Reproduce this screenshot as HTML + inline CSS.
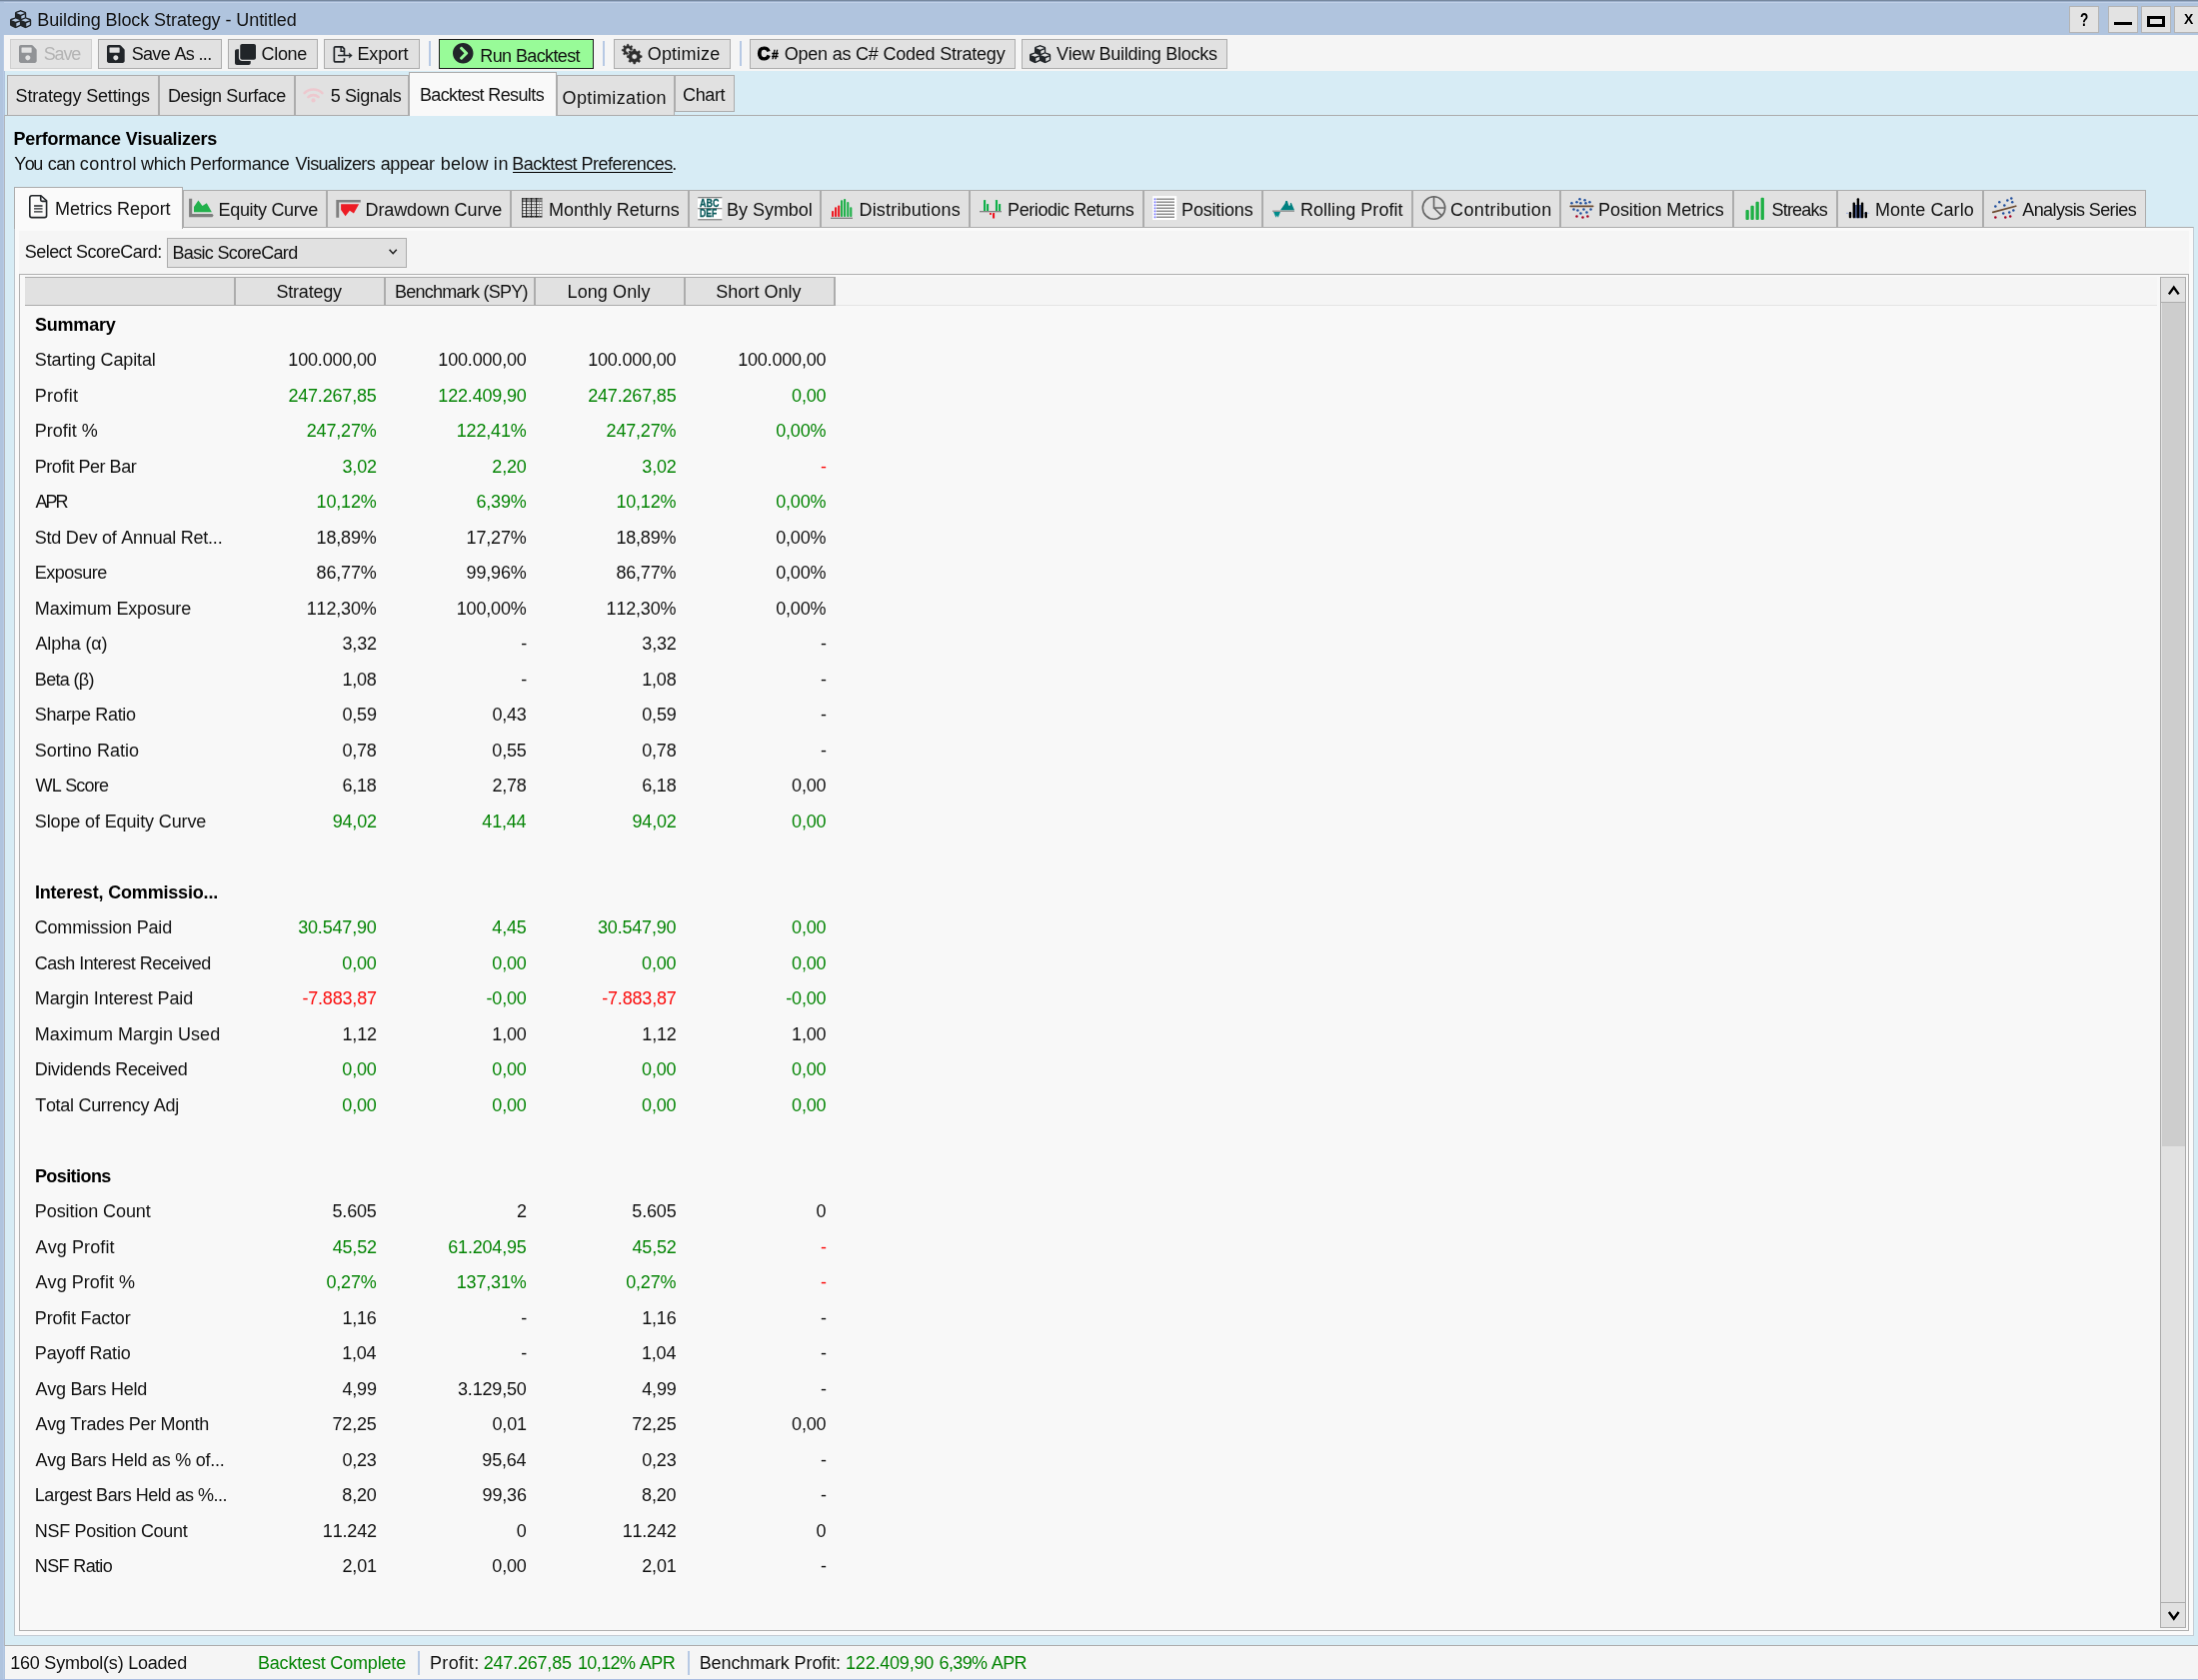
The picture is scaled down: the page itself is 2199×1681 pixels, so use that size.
<!DOCTYPE html>
<html lang="en"><head><meta charset="utf-8"><title>Building Block Strategy - Untitled</title>
<style>
html,body{margin:0;padding:0}
body{width:2199px;height:1681px;position:relative;overflow:hidden;background:#d7ecf5;
font-family:"Liberation Sans",sans-serif;font-size:18.0px;color:#121212;font-kerning:none;}
#root{position:absolute;left:0;top:0;width:2199px;height:1681px;will-change:transform}
.b{position:absolute;box-sizing:content-box}
.t{position:absolute;white-space:pre;line-height:22px;height:22px}
svg{position:absolute;overflow:visible}
</style></head>
<body>
<div id="root">
<div class="b" style="left:0px;top:0px;width:2199px;height:35px;background:#b0c4de;"></div>
<div class="b" style="left:0px;top:0px;width:2199px;height:1px;background:#76889f;"></div>
<div class="b" style="left:0px;top:1px;width:2199px;height:1px;background:#9db0cb;"></div>
<div class="b" style="left:4px;top:2px;width:2195px;height:1px;background:#c0d0e7;"></div>
<div class="b" style="left:0px;top:35px;width:5px;height:1646px;background:#b0c4de;"></div>
<div class="b" style="left:3px;top:35px;width:1px;height:1646px;background:#b8cae4;"></div>
<div class="b" style="left:4px;top:115px;width:1px;height:1532px;background:#b2b6bc;"></div>
<div class="b" style="left:4px;top:35px;width:2195px;height:36px;background:#f5f5f5;"></div>
<svg style="left:9.8px;top:9.8px" width="21.2" height="18.2" viewBox="0 31 512 450" preserveAspectRatio="none" ><path fill="#212529" d="M488.6 250.2L392 214V105.5c0-15-9.3-28.4-23.4-33.7l-100-37.5c-8.1-3.1-17.100-3.100-25.300 0l-100 37.500c-14.100 5.300-23.400 18.700-23.400 33.700V214l-96.600 36.200C9.300 255.500 0 268.900 0 283.900V394c0 13.600 7.700 26.100 19.900 32.200l100 50c10.100 5.100 22.100 5.100 32.200 0l103.900-52 103.900 52c10.100 5.100 22.100 5.100 32.200 0l100-50c12.200-6.100 19.900-18.600 19.900-32.200V283.900c0-15-9.300-28.400-23.400-33.700zM358 214.800l-85 31.900v-68.200l85-37v73.300zM154 104.100l102-38.200 102 38.200v.6l-102 41.400-102-41.400v-.6zm84 291.100l-85 42.500v-79.100l85-38.800v75.400zm0-112l-102 41.400-102-41.400v-.6l102-38.200 102 38.200v.6zm240 112l-85 42.500v-79.100l85-38.800v75.400zm0-112l-102 41.400-102-41.400v-.6l102-38.200 102 38.200v.6z"/></svg>
<span class="t" style="left:37.22px;top:8.50px;letter-spacing:-0.078px;">Building Block Strategy - Untitled</span>
<div class="b" style="left:2070px;top:6px;width:28px;height:25px;background:#e3e3e3;border:1px solid #b4b4b4;"></div>
<div class="b" style="left:2109px;top:6px;width:28px;height:25px;background:#e3e3e3;border:1px solid #b4b4b4;"></div>
<div class="b" style="left:2142px;top:6px;width:28px;height:25px;background:#e3e3e3;border:1px solid #b4b4b4;"></div>
<div class="b" style="left:2175px;top:6px;width:28px;height:25px;background:#e3e3e3;border:1px solid #b4b4b4;"></div>
<span class="t" style="left:2081.20px;top:9.00px;letter-spacing:0.000px;color:#000000;font-size:17.5px;font-weight:700;transform:scaleX(.78);transform-origin:0 0;">?</span>
<div class="b" style="left:2115px;top:21.5px;width:18px;height:3.5px;background:#000;"></div>
<div class="b" style="left:2148px;top:16px;width:18px;height:10.5px;border:3px solid #000;box-sizing:border-box;"></div>
<span class="t" style="left:2184.88px;top:8.20px;letter-spacing:0.000px;color:#000000;font-size:14px;font-weight:700;">X</span>
<div class="b" style="left:10px;top:39px;width:80px;height:28px;background:#e3e3e3;border:1px solid #cfcfcf;"></div>
<svg style="left:19px;top:45px" width="17.7" height="18" viewBox="0 32 448 448" preserveAspectRatio="none" ><path fill="#919396" d="M433.941 129.941l-83.882-83.882A48 48 0 0 0 316.118 32H48C21.490 32 0 53.490 0 80v352c0 26.510 21.490 48 48 48h352c26.510 0 48-21.490 48-48V163.882a48 48 0 0 0-14.059-33.941zM224 416c-35.346 0-64-28.654-64-64 0-35.346 28.654-64 64-64s64 28.654 64 64c0 35.346-28.654 64-64 64zm96-304.520V212c0 6.627-5.373 12-12 12H76c-6.627 0-12-5.373-12-12V108c0-6.627 5.373-12 12-12h228.520c3.183 0 6.235 1.264 8.485 3.515l3.480 3.480A11.996 11.996 0 0 1 320 111.480z"/></svg>
<span class="t" style="left:43.68px;top:42.60px;letter-spacing:-1.137px;color:#b4b4b4;">Save</span>
<div class="b" style="left:98px;top:39px;width:122px;height:28px;background:#e1e1e1;border:1px solid #acacac;"></div>
<svg style="left:107px;top:45px" width="17.7" height="18" viewBox="0 32 448 448" preserveAspectRatio="none" ><path fill="#212529" d="M433.941 129.941l-83.882-83.882A48 48 0 0 0 316.118 32H48C21.490 32 0 53.490 0 80v352c0 26.510 21.490 48 48 48h352c26.510 0 48-21.490 48-48V163.882a48 48 0 0 0-14.059-33.941zM224 416c-35.346 0-64-28.654-64-64 0-35.346 28.654-64 64-64s64 28.654 64 64c0 35.346-28.654 64-64 64zm96-304.520V212c0 6.627-5.373 12-12 12H76c-6.627 0-12-5.373-12-12V108c0-6.627 5.373-12 12-12h228.520c3.183 0 6.235 1.264 8.485 3.515l3.480 3.480A11.996 11.996 0 0 1 320 111.480z"/></svg>
<span class="t" style="left:131.68px;top:42.60px;letter-spacing:-0.658px;">Save As ...</span>
<div class="b" style="left:228px;top:39px;width:88px;height:28px;background:#e1e1e1;border:1px solid #acacac;"></div>
<svg style="left:235px;top:43.8px" width="21" height="21" viewBox="0 0 512 512" preserveAspectRatio="none" ><path fill="#212529" d="M464 0c26.510 0 48 21.490 48 48v288c0 26.510-21.490 48-48 48H176c-26.510 0-48-21.490-48-48V48c0-26.510 21.490-48 48-48h288M176 416c-44.112 0-80-35.888-80-80V128H48c-26.510 0-48 21.490-48 48v288c0 26.510 21.490 48 48 48h288c26.510 0 48-21.490 48-48v-48H176z"/></svg>
<span class="t" style="left:261.59px;top:42.60px;letter-spacing:-0.329px;">Clone</span>
<div class="b" style="left:324px;top:39px;width:94px;height:28px;background:#e1e1e1;border:1px solid #acacac;"></div>
<svg style="left:332.6px;top:46px" width="19" height="17" viewBox="0 0 19 17" preserveAspectRatio="none" ><path d="M11.45 12.2V14.7a1.2 1.2 0 0 1-1.2 1.2H2.55a1.2 1.2 0 0 1-1.2-1.2V2.05A1.2 1.2 0 0 1 2.55 0.85H9.5L11.45 2.9V9" fill="none" stroke="#212529" stroke-width="1.7" stroke-linejoin="round"/><path d="M8.1 1V5.2H11.4" fill="none" stroke="#212529" stroke-width="1.5"/><path d="M5.6 9.5H17.6" stroke="#212529" stroke-width="1.5" stroke-linecap="round" fill="none"/><path d="M16.2 7L19.3 9.5L16.2 12.1L17 9.5z" fill="#212529" stroke="#212529" stroke-width="0.5" stroke-linejoin="round"/></svg>
<span class="t" style="left:357.52px;top:42.60px;letter-spacing:-0.183px;">Export</span>
<div class="b" style="left:429px;top:41px;width:2px;height:25px;background:#b7c9e4;"></div>
<div class="b" style="left:439px;top:39px;width:153px;height:28px;background:#98fb98;border:1px solid #1c1c1c;"></div>
<svg style="left:453px;top:43.2px" width="20.5" height="20.5" viewBox="8 8 496 496" preserveAspectRatio="none" ><path fill="#212529" d="M256 8c137 0 248 111 248 248S393 504 256 504 8 393 8 256 119 8 256 8zm113.900 231L234.400 103.500c-9.400-9.400-24.600-9.400-33.900 0l-17 17c-9.400 9.400-9.400 24.600 0 33.900L285.100 256 183.500 357.600c-9.400 9.400-9.400 24.600 0 33.900l17 17c9.400 9.400 24.600 9.400 33.900 0L369.900 273c9.400-9.400 9.400-24.600 0-34z"/></svg>
<span class="t" style="left:480.32px;top:44.70px;letter-spacing:-0.613px;">Run Backtest</span>
<div class="b" style="left:603px;top:41px;width:2px;height:25px;background:#b7c9e4;"></div>
<div class="b" style="left:614px;top:39px;width:115px;height:28px;background:#e1e1e1;border:1px solid #acacac;"></div>
<svg style="left:621.5px;top:44px" width="20.5" height="20.5" viewBox="0 0 20.5 20.5" preserveAspectRatio="none" ><path d="M10.42 5.14 L12.11 5.54 L12.11 6.86 L10.42 7.26 L9.92 8.47 L10.83 9.95 L9.90 10.88 L8.42 9.97 L7.21 10.47 L6.81 12.16 L5.49 12.16 L5.09 10.47 L3.88 9.97 L2.40 10.88 L1.47 9.95 L2.38 8.47 L1.88 7.26 L0.19 6.86 L0.19 5.54 L1.88 5.14 L2.38 3.93 L1.47 2.45 L2.40 1.52 L3.88 2.43 L5.09 1.93 L5.49 0.24 L6.81 0.24 L7.21 1.93 L8.42 2.43 L9.90 1.52 L10.83 2.45 L9.92 3.93Z M8.35 6.20 A2.2 2.2 0 1 0 3.95 6.20 A2.2 2.2 0 1 0 8.35 6.20Z" fill="#2e2e2e" fill-rule="evenodd" stroke="#2e2e2e" stroke-width="0.5" stroke-linejoin="round"/><path d="M18.23 11.19 L20.15 11.74 L20.15 13.38 L18.23 13.93 L17.58 15.50 L18.55 17.25 L17.39 18.41 L15.64 17.44 L14.07 18.09 L13.52 20.01 L11.88 20.01 L11.33 18.09 L9.76 17.44 L8.01 18.41 L6.85 17.25 L7.82 15.50 L7.17 13.93 L5.25 13.38 L5.25 11.74 L7.17 11.19 L7.82 9.62 L6.85 7.87 L8.01 6.71 L9.76 7.68 L11.33 7.03 L11.88 5.11 L13.52 5.11 L14.07 7.03 L15.64 7.68 L17.39 6.71 L18.55 7.87 L17.58 9.62Z" fill="#e1e1e1" stroke="#e1e1e1" stroke-width="1.8" stroke-linejoin="round"/><path d="M18.23 11.19 L20.15 11.74 L20.15 13.38 L18.23 13.93 L17.58 15.50 L18.55 17.25 L17.39 18.41 L15.64 17.44 L14.07 18.09 L13.52 20.01 L11.88 20.01 L11.33 18.09 L9.76 17.44 L8.01 18.41 L6.85 17.25 L7.82 15.50 L7.17 13.93 L5.25 13.38 L5.25 11.74 L7.17 11.19 L7.82 9.62 L6.85 7.87 L8.01 6.71 L9.76 7.68 L11.33 7.03 L11.88 5.11 L13.52 5.11 L14.07 7.03 L15.64 7.68 L17.39 6.71 L18.55 7.87 L17.58 9.62Z M15.34 12.56 A2.64 2.64 0 1 0 10.06 12.56 A2.64 2.64 0 1 0 15.34 12.56Z" fill="#2e2e2e" fill-rule="evenodd" stroke="#2e2e2e" stroke-width="0.5" stroke-linejoin="round"/></svg>
<span class="t" style="left:647.65px;top:42.60px;letter-spacing:0.234px;">Optimize</span>
<div class="b" style="left:740px;top:41px;width:2px;height:25px;background:#b7c9e4;"></div>
<div class="b" style="left:750px;top:39px;width:264px;height:28px;background:#e1e1e1;border:1px solid #acacac;"></div>
<span class="t" style="left:757.68px;top:43.40px;letter-spacing:0.000px;color:#000000;font-size:17.6px;font-weight:700;-webkit-text-stroke:1.2px #000;">C</span>
<span class="t" style="left:771.99px;top:43.60px;letter-spacing:0.000px;color:#000000;font-size:12px;font-weight:700;-webkit-text-stroke:0.4px #000;">#</span>
<span class="t" style="left:784.75px;top:42.60px;letter-spacing:-0.219px;">Open as C# Coded Strategy</span>
<div class="b" style="left:1022px;top:39px;width:204px;height:28px;background:#e1e1e1;border:1px solid #acacac;"></div>
<svg style="left:1029.6px;top:45.4px" width="21.2" height="18.2" viewBox="0 31 512 450" preserveAspectRatio="none" ><path fill="#212529" d="M488.6 250.2L392 214V105.5c0-15-9.3-28.4-23.4-33.7l-100-37.5c-8.1-3.1-17.100-3.100-25.300 0l-100 37.500c-14.100 5.300-23.400 18.700-23.400 33.700V214l-96.600 36.200C9.300 255.500 0 268.900 0 283.900V394c0 13.600 7.700 26.100 19.900 32.200l100 50c10.100 5.100 22.100 5.100 32.200 0l103.900-52 103.900 52c10.100 5.100 22.100 5.100 32.200 0l100-50c12.200-6.100 19.900-18.600 19.900-32.200V283.900c0-15-9.300-28.400-23.400-33.700zM358 214.800l-85 31.900v-68.200l85-37v73.300zM154 104.100l102-38.200 102 38.200v.6l-102 41.400-102-41.400v-.6zm84 291.100l-85 42.500v-79.100l85-38.800v75.400zm0-112l-102 41.400-102-41.400v-.6l102-38.200 102 38.200v.6zm240 112l-85 42.500v-79.100l85-38.800v75.400zm0-112l-102 41.400-102-41.400v-.6l102-38.200 102 38.200v.6z"/></svg>
<span class="t" style="left:1056.92px;top:42.60px;letter-spacing:-0.260px;">View Building Blocks</span>
<div class="b" style="left:5px;top:115px;width:2194px;height:1px;background:#acacac;"></div>
<div class="b" style="left:7px;top:75px;width:150px;height:39px;background:#e1e1e1;border:1px solid #acacac;"></div>
<span class="t" style="left:15.58px;top:85.00px;letter-spacing:-0.163px;">Strategy Settings</span>
<div class="b" style="left:159px;top:75px;width:134px;height:39px;background:#e1e1e1;border:1px solid #acacac;"></div>
<span class="t" style="left:167.92px;top:85.00px;letter-spacing:-0.368px;">Design Surface</span>
<div class="b" style="left:295px;top:75px;width:112px;height:39px;background:#e1e1e1;border:1px solid #acacac;"></div>
<svg style="left:303.4px;top:86.6px" width="21" height="15.4" viewBox="0 0 21 15.4" preserveAspectRatio="none" ><path d="M1.6 6.2A12.6 12.6 0 0 1 19.4 6.2" fill="none" stroke="#edc8ce" stroke-width="2.6" stroke-linecap="round"/><path d="M5.4 10.2A7.2 7.2 0 0 1 15.6 10.2" fill="none" stroke="#edc8ce" stroke-width="2.6" stroke-linecap="round"/><circle cx="10.5" cy="13.4" r="2.1" fill="#edc8ce"/></svg>
<span class="t" style="left:330.68px;top:85.00px;letter-spacing:-0.385px;">5 Signals</span>
<div class="b" style="left:557px;top:75px;width:116px;height:39px;background:#e1e1e1;border:1px solid #acacac;"></div>
<span class="t" style="left:562.55px;top:87.00px;letter-spacing:0.362px;">Optimization</span>
<div class="b" style="left:675px;top:75px;width:58px;height:35px;background:#e1e1e1;border:1px solid #acacac;"></div>
<span class="t" style="left:683.09px;top:84.00px;letter-spacing:-0.392px;">Chart</span>
<div class="b" style="left:409px;top:72px;width:146px;height:43px;background:#f9f9f9;border:1px solid #acacac;border-bottom:none;"></div>
<span class="t" style="left:419.92px;top:84.00px;letter-spacing:-0.622px;">Backtest Results</span>
<span class="t" style="left:13.40px;top:128.00px;letter-spacing:-0.234px;font-weight:700;color:#000;">Performance Visualizers</span>
<span class="t" style="left:14.20px;top:153.20px;letter-spacing:-1.518px;">You</span>
<span class="t" style="left:47.84px;top:153.20px;letter-spacing:-0.644px;">can</span>
<span class="t" style="left:79.84px;top:153.20px;letter-spacing:0.457px;">control</span>
<span class="t" style="left:141.03px;top:153.20px;letter-spacing:-0.219px;">which</span>
<span class="t" style="left:190.12px;top:153.20px;letter-spacing:-0.337px;">Performance</span>
<span class="t" style="left:295.52px;top:153.20px;letter-spacing:-0.690px;">Visualizers</span>
<span class="t" style="left:380.74px;top:153.20px;letter-spacing:-0.377px;">appear</span>
<span class="t" style="left:440.74px;top:153.20px;letter-spacing:0.171px;">below</span>
<span class="t" style="left:493.80px;top:153.20px;letter-spacing:0.763px;">in</span>
<span class="t" style="left:512.32px;top:153.20px;letter-spacing:-0.534px;">Backtest Preferences</span>
<div class="b" style="left:513.3px;top:172px;width:159.4px;height:1px;background:#000;"></div>
<span class="t" style="left:672.36px;top:153.20px;letter-spacing:0.000px;">.</span>
<div class="b" style="left:14px;top:227px;width:2179px;height:1408px;background:#fafafa;border:1px solid #acacac;border-left-color:#bcc4ca;border-right-color:#c4ccd4;border-bottom-color:#c4ccd4;"></div>
<div class="b" style="left:19px;top:231px;width:2171px;height:43px;background:#f5f5f5;"></div>
<div class="b" style="left:183px;top:190px;width:142px;height:36px;background:#e1e1e1;border:1px solid #acacac;"></div>
<div class="b" style="left:327px;top:190px;width:182px;height:36px;background:#e1e1e1;border:1px solid #acacac;"></div>
<div class="b" style="left:511px;top:190px;width:176px;height:36px;background:#e1e1e1;border:1px solid #acacac;"></div>
<div class="b" style="left:689px;top:190px;width:130px;height:36px;background:#e1e1e1;border:1px solid #acacac;"></div>
<div class="b" style="left:821px;top:190px;width:147px;height:36px;background:#e1e1e1;border:1px solid #acacac;"></div>
<div class="b" style="left:970px;top:190px;width:172px;height:36px;background:#e1e1e1;border:1px solid #acacac;"></div>
<div class="b" style="left:1144px;top:190px;width:117px;height:36px;background:#e1e1e1;border:1px solid #acacac;"></div>
<div class="b" style="left:1263px;top:190px;width:148px;height:36px;background:#e1e1e1;border:1px solid #acacac;"></div>
<div class="b" style="left:1413px;top:190px;width:146px;height:36px;background:#e1e1e1;border:1px solid #acacac;"></div>
<div class="b" style="left:1561px;top:190px;width:171px;height:36px;background:#e1e1e1;border:1px solid #acacac;"></div>
<div class="b" style="left:1734px;top:190px;width:102px;height:36px;background:#e1e1e1;border:1px solid #acacac;"></div>
<div class="b" style="left:1838px;top:190px;width:144px;height:36px;background:#e1e1e1;border:1px solid #acacac;"></div>
<div class="b" style="left:1984px;top:190px;width:161px;height:36px;background:#e1e1e1;border:1px solid #acacac;"></div>
<div class="b" style="left:14px;top:187px;width:167px;height:41px;background:#fafafa;border:1px solid #acacac;border-bottom:none;"></div>
<svg style="left:29px;top:195px" width="18.4" height="23.4" viewBox="0 0 18.2 24.2" preserveAspectRatio="none" ><path d="M2.6 0.8H11.8L17.4 6V21.4a2 2 0 0 1-2 2H2.8a2 2 0 0 1-2-2V2.8a2 2 0 0 1 2-2z" fill="none" stroke="#212529" stroke-width="1.6" stroke-linejoin="round"/><path d="M11.6 1V5.2a1.4 1.4 0 0 0 1.4 1.4H17.2" fill="none" stroke="#212529" stroke-width="1.6"/><path d="M5 11.4H13.4M5 14.4H13.4M5 17.5H13.4" stroke="#212529" stroke-width="1.4"/></svg>
<span class="t" style="left:55.12px;top:198.00px;letter-spacing:-0.124px;">Metrics Report</span>
<svg style="left:189px;top:199.4px" width="24.6" height="18.2" viewBox="0 0 24.6 18.2" preserveAspectRatio="none" ><path d="M0.1 -0.2H3.2V15H23.4L24.7 16.6L23.4 18.3H0.1z" fill="#7f7f7f"/><path d="M5 13.3V7.9L9.4 1.6L13.5 7.1L17.8 4.3L22.9 13.3z" fill="#22b14c"/></svg>
<span class="t" style="left:218.52px;top:199.00px;letter-spacing:-0.306px;">Equity Curve</span>
<svg style="left:335.8px;top:200px" width="24.6" height="17.6" viewBox="0 0 24.6 17.6" preserveAspectRatio="none" ><path d="M0.3 0H24.8V2.6H3.2V17.8H0.3z" fill="#7f7f7f"/><path d="M5.1 4.3H23.1L17.95 13.6L13.85 10.8L9.6 16.3L5.1 10z" fill="#ed1c24"/></svg>
<span class="t" style="left:365.52px;top:199.00px;letter-spacing:-0.106px;">Drawdown Curve</span>
<svg style="left:522px;top:198.4px" width="20.4" height="19.2" viewBox="0 0 20.4 19.2" preserveAspectRatio="none" ><rect x="0" y="0" width="20.4" height="19.2" fill="#fff"/><rect x="0" y="0" width="20.4" height="3.2" fill="#9a9a9a"/><rect x="0" y="0.3" width="20.4" height="0.85" fill="#333"/><rect x="0" y="3.3" width="20.4" height="0.85" fill="#333"/><rect x="0" y="6.3" width="20.4" height="0.85" fill="#333"/><rect x="0" y="9.3" width="20.4" height="0.85" fill="#333"/><rect x="0" y="12.3" width="20.4" height="0.85" fill="#333"/><rect x="0" y="15.3" width="20.4" height="0.85" fill="#333"/><rect x="0" y="17.9" width="20.4" height="1.6" fill="#222"/><rect x="0.2" y="0" width="1.0" height="19.4" fill="#222"/><rect x="4.1" y="0" width="1.05" height="19.4" fill="#1a1a1a"/><rect x="6.9" y="0" width="0.6" height="19.4" fill="#8a8a8a"/><rect x="9.1" y="0" width="1.05" height="19.4" fill="#1a1a1a"/><rect x="11.9" y="0" width="0.6" height="19.4" fill="#8a8a8a"/><rect x="14.1" y="0" width="1.05" height="19.4" fill="#1a1a1a"/><rect x="17.0" y="0" width="0.6" height="19.4" fill="#8a8a8a"/><rect x="19.7" y="0" width="0.7" height="19.4" fill="#777"/></svg>
<span class="t" style="left:549.12px;top:199.00px;letter-spacing:-0.038px;">Monthly Returns</span>
<svg style="left:697.8px;top:197px" width="24.4" height="23" viewBox="0 0 24.4 23" preserveAspectRatio="none" ><rect x="0" y="0.4" width="24.4" height="22.6" fill="#fff"/><rect x="0.2" y="0" width="24.2" height="1.3" fill="#848484"/><rect x="0.2" y="11" width="24.2" height="1.3" fill="#848484"/><rect x="0.2" y="22.1" width="24.2" height="1.3" fill="#848484"/><text x="2.1" y="9.7" font-family="Liberation Sans, sans-serif" font-weight="700" font-size="10.4" fill="#0b5a5c" stroke="#0b5a5c" stroke-width="0.3" textLength="19.4" lengthAdjust="spacingAndGlyphs">ABC</text><text x="2.1" y="20" font-family="Liberation Sans, sans-serif" font-weight="700" font-size="10.4" fill="#0b5a5c" stroke="#0b5a5c" stroke-width="0.3" textLength="17.2" lengthAdjust="spacingAndGlyphs">DEF</text></svg>
<span class="t" style="left:727.12px;top:199.00px;letter-spacing:-0.043px;">By Symbol</span>
<svg style="left:831px;top:199px" width="22" height="19.4" viewBox="0 0 22 19.4" preserveAspectRatio="none" ><rect x="0" y="18.7" width="22" height="1.2" fill="#777"/><rect x="1" y="12.1" width="2.15" height="5.9" rx="0.8" fill="#ed1c24"/><rect x="4" y="8.3" width="2.15" height="9.7" rx="0.8" fill="#ed1c24"/><rect x="7.1" y="6.4" width="2.15" height="11.6" rx="0.8" fill="#ed1c24"/><rect x="10" y="1.3" width="2.15" height="16.7" rx="0.8" fill="#22b14c"/><rect x="13" y="0" width="2.15" height="18" rx="0.8" fill="#22b14c"/><rect x="16.2" y="3.1" width="2.15" height="14.9" rx="0.8" fill="#22b14c"/><rect x="19.2" y="8.2" width="2.15" height="9.8" rx="0.8" fill="#22b14c"/></svg>
<span class="t" style="left:859.52px;top:199.00px;letter-spacing:0.174px;">Distributions</span>
<svg style="left:980px;top:200px" width="22" height="18.4" viewBox="0 0 22 18.4" preserveAspectRatio="none" ><rect x="0" y="11.1" width="22" height="1.2" fill="#777"/><rect x="4" y="0" width="2.15" height="11" rx="0.6" fill="#10b04a"/><rect x="7" y="4" width="2.15" height="7" rx="0.6" fill="#10b04a"/><rect x="15.9" y="0" width="2.15" height="11" rx="0.6" fill="#10b04a"/><rect x="19" y="4" width="2.15" height="7" rx="0.6" fill="#10b04a"/><rect x="10" y="13" width="1.9" height="1.9" fill="#f0101c"/><rect x="13" y="13" width="2.1" height="5.6" rx="0.5" fill="#f0101c"/></svg>
<span class="t" style="left:1008.12px;top:199.00px;letter-spacing:-0.435px;">Periodic Returns</span>
<svg style="left:1153px;top:196.4px" width="24" height="23.6" viewBox="0 0 24 23.6" preserveAspectRatio="none" ><rect x="0.2" y="0.2" width="24" height="23.8" fill="#fff"/><rect x="1.7" y="2.4000000000000004" width="1.6" height="1.8" fill="#6c6cff"/><rect x="4" y="2.5500000000000003" width="18" height="1.3" fill="#7d7d7d"/><rect x="1.7" y="5.4" width="1.6" height="1.8" fill="#6c6cff"/><rect x="4" y="5.55" width="18" height="1.3" fill="#7d7d7d"/><rect x="1.7" y="8.45" width="1.6" height="1.8" fill="#6c6cff"/><rect x="4" y="8.6" width="18" height="1.3" fill="#7d7d7d"/><rect x="1.7" y="11.45" width="1.6" height="1.8" fill="#6c6cff"/><rect x="4" y="11.6" width="18" height="1.3" fill="#7d7d7d"/><rect x="1.7" y="14.45" width="1.6" height="1.8" fill="#6c6cff"/><rect x="4" y="14.6" width="18" height="1.3" fill="#7d7d7d"/><rect x="1.7" y="17.45" width="1.6" height="1.8" fill="#6c6cff"/><rect x="4" y="17.6" width="18" height="1.3" fill="#7d7d7d"/><rect x="1.7" y="20.45" width="1.6" height="1.8" fill="#6c6cff"/><rect x="4" y="20.6" width="18" height="1.3" fill="#7d7d7d"/></svg>
<span class="t" style="left:1182.12px;top:199.00px;letter-spacing:-0.189px;">Positions</span>
<svg style="left:1273px;top:200px" width="22" height="18" viewBox="0 0 22 18" preserveAspectRatio="none" ><rect x="0" y="10.6" width="22" height="1.2" fill="#888"/><path d="M8 10.3L12.5 3.7L13.3 1H14.9L16.3 5.65H17.7L18 2.9H18.9L22 10.3z" fill="#008080"/><path d="M1.1 12.1H8L5.6 17.7L4.6 15.5L3.5 17.7z" fill="#008b8b"/></svg>
<span class="t" style="left:1300.92px;top:199.00px;letter-spacing:0.044px;">Rolling Profit</span>
<svg style="left:1421.6px;top:196.4px" width="24.4" height="24.2" viewBox="0 0 24.4 24.2" preserveAspectRatio="none" ><circle cx="12.55" cy="12" r="11.2" fill="none" stroke="#666" stroke-width="1.6"/><path d="M12.55 0.8V12H23.7M12.55 12L20.5 19.9" fill="none" stroke="#666" stroke-width="1.6"/></svg>
<span class="t" style="left:1451.09px;top:199.00px;letter-spacing:0.366px;">Contribution</span>
<svg style="left:1569.8px;top:198px" width="24.2" height="20.4" viewBox="0 0 24.2 20.4" preserveAspectRatio="none" ><rect x="0.39" y="7.53" width="24.1" height="1.6" rx="0.6" fill="#6b4a2f"/><circle cx="10.49" cy="1.37" r="1.25" fill="#1f4e9c"/><circle cx="15.54" cy="2.33" r="1.25" fill="#1f4e9c"/><circle cx="20.45" cy="4.37" r="1.25" fill="#1f4e9c"/><circle cx="7.49" cy="4.37" r="1.25" fill="#1f4e9c"/><circle cx="2.43" cy="5.33" r="1.25" fill="#1f4e9c"/><circle cx="11.44" cy="5.33" r="1.25" fill="#1f4e9c"/><circle cx="16.49" cy="5.33" r="1.25" fill="#1f4e9c"/><circle cx="4.48" cy="11.47" r="1.25" fill="#1f4e9c"/><circle cx="8.44" cy="12.43" r="1.25" fill="#1f4e9c"/><circle cx="14.45" cy="11.47" r="1.25" fill="#1f4e9c"/><circle cx="21.54" cy="11.47" r="1.25" fill="#1f4e9c"/><circle cx="11.44" cy="15.43" r="1.25" fill="#1f4e9c"/><circle cx="17.45" cy="14.48" r="1.25" fill="#1f4e9c"/><circle cx="7.49" cy="18.43" r="1.25" fill="#a50021"/><circle cx="13.49" cy="19.39" r="1.25" fill="#a50021"/><circle cx="18.41" cy="18.43" r="1.25" fill="#a50021"/></svg>
<span class="t" style="left:1599.12px;top:199.00px;letter-spacing:-0.101px;">Position Metrics</span>
<svg style="left:1745.6px;top:198.4px" width="18.8" height="21.6" viewBox="0 0 18.8 21.6" preserveAspectRatio="none" ><rect x="0.5" y="11.9" width="3.3" height="10.200000000000001" rx="1" fill="#1db045"/><rect x="5.45" y="7.8" width="3.3" height="14.3" rx="1" fill="#1db045"/><rect x="10.5" y="3.8" width="3.3" height="18.3" rx="1" fill="#1db045"/><rect x="15.6" y="-0.3" width="3.3" height="22.400000000000002" rx="1" fill="#1db045"/></svg>
<span class="t" style="left:1772.58px;top:199.00px;letter-spacing:-0.826px;">Streaks</span>
<svg style="left:1847.4px;top:197.6px" width="23.6" height="20.4" viewBox="0 0 23.6 20.4" preserveAspectRatio="none" ><path d="M0 15.4H24" stroke="#a9b7dd" stroke-width="1.2" stroke-dasharray="2.2 1.2"/><rect x="7.4" y="7" width="9.4" height="13.2" fill="#4c5c8c"/><rect x="2.8" y="14.05" width="2.4" height="6.149999999999999" rx="0.9" fill="#000"/><rect x="6.6" y="4.5" width="2.4" height="15.7" rx="0.9" fill="#000"/><rect x="10.7" y="0.3" width="2.4" height="19.9" rx="0.9" fill="#000"/><rect x="14.9" y="4.5" width="2.4" height="15.7" rx="0.9" fill="#000"/><rect x="18.6" y="14.05" width="2.4" height="6.149999999999999" rx="0.9" fill="#000"/></svg>
<span class="t" style="left:1875.92px;top:199.00px;letter-spacing:0.079px;">Monte Carlo</span>
<svg style="left:1993px;top:197px" width="24.4" height="22" viewBox="0 0 24.4 22" preserveAspectRatio="none" ><path d="M0.79 15.34L23.75 9.20" stroke="#6b4a2f" stroke-width="1.7" stroke-linecap="round"/><circle cx="19.30" cy="1.42" r="1.25" fill="#1f4e9c"/><circle cx="15.34" cy="3.46" r="1.25" fill="#1f4e9c"/><circle cx="7.29" cy="5.37" r="1.25" fill="#1f4e9c"/><circle cx="20.25" cy="5.37" r="1.25" fill="#1f4e9c"/><circle cx="12.34" cy="8.38" r="1.25" fill="#1f4e9c"/><circle cx="3.33" cy="9.47" r="1.25" fill="#1f4e9c"/><circle cx="21.34" cy="13.43" r="1.25" fill="#1f4e9c"/><circle cx="17.25" cy="15.48" r="1.25" fill="#1f4e9c"/><circle cx="11.24" cy="16.43" r="1.25" fill="#1f4e9c"/><circle cx="3.33" cy="20.39" r="1.25" fill="#a50021"/><circle cx="13.29" cy="20.39" r="1.25" fill="#a50021"/><circle cx="18.21" cy="19.43" r="1.25" fill="#a50021"/></svg>
<span class="t" style="left:2023.36px;top:199.00px;letter-spacing:-0.626px;">Analysis Series</span>
<span class="t" style="left:24.78px;top:241.00px;letter-spacing:-0.544px;">Select ScoreCard:</span>
<div class="b" style="left:167px;top:238px;width:238px;height:28px;background:#e1e1e1;border:1px solid #acacac;"></div>
<span class="t" style="left:172.52px;top:241.70px;letter-spacing:-0.673px;">Basic ScoreCard</span>
<svg style="left:388.9px;top:248.6px" width="8.4" height="5.6" viewBox="0 0 8.4 5.6" preserveAspectRatio="none" ><path d="M0.6 0.8L4.2 4.699999999999999L7.800000000000001 0.8" fill="none" stroke="#222" stroke-width="1.6"/></svg>
<div class="b" style="left:19px;top:274px;width:2169px;height:1356px;background:#f8f8f8;border:1px solid #b0b0b0;"></div>
<div class="b" style="left:25px;top:277px;width:2133px;height:28px;background:#f5f5f5;border-bottom:1px solid #e4e4e4;"></div>
<div class="b" style="left:25px;top:277px;width:810px;height:27px;background:#e1e1e1;border-top:1px solid #acacac;border-bottom:1px solid #acacac;"></div>
<div class="b" style="left:234px;top:277px;width:2px;height:29px;background:#acacac;"></div>
<div class="b" style="left:384px;top:277px;width:2px;height:29px;background:#acacac;"></div>
<div class="b" style="left:534px;top:277px;width:2px;height:29px;background:#acacac;"></div>
<div class="b" style="left:684px;top:277px;width:2px;height:29px;background:#acacac;"></div>
<div class="b" style="left:834px;top:277px;width:2px;height:29px;background:#acacac;"></div>
<span class="t" style="left:276.48px;top:280.90px;letter-spacing:-0.212px;">Strategy</span>
<span class="t" style="left:394.92px;top:280.90px;letter-spacing:-0.747px;">Benchmark (SPY)</span>
<span class="t" style="left:567.52px;top:280.90px;letter-spacing:0.107px;">Long Only</span>
<span class="t" style="left:716.18px;top:280.90px;letter-spacing:0.046px;">Short Only</span>
<div class="b" style="left:2161px;top:277px;width:24px;height:1350px;background:#e1e1e1;border:1px solid #adadad;"></div>
<div class="b" style="left:2163px;top:303px;width:23px;height:844px;background:#cdcdcd;"></div>
<div class="b" style="left:2161px;top:302px;width:26px;height:1px;background:#adadad;"></div>
<div class="b" style="left:2161px;top:1603px;width:26px;height:1px;background:#adadad;"></div>
<svg style="left:2168.6px;top:285.6px" width="11.6" height="9.4" viewBox="0 0 11.6 9.4" preserveAspectRatio="none" ><path d="M0.9 8.4L5.8 1.6L10.7 8.4" fill="none" stroke="#000" stroke-width="2.4"/></svg>
<svg style="left:2168.6px;top:1611.8px" width="11.6" height="9.4" viewBox="0 0 11.6 9.4" preserveAspectRatio="none" ><path d="M0.9 1L5.8 7.800000000000001L10.7 1" fill="none" stroke="#000" stroke-width="2.4"/></svg>
<span class="t" style="left:35.08px;top:313.50px;letter-spacing:-0.237px;font-weight:700;color:#000;">Summary</span>
<span class="t" style="left:34.78px;top:349.00px;letter-spacing:-0.136px;">Starting Capital</span>
<span class="t" style="left:288.34px;top:349.00px;letter-spacing:-0.180px;">100.000,00</span>
<span class="t" style="left:438.34px;top:349.00px;letter-spacing:-0.180px;">100.000,00</span>
<span class="t" style="left:588.14px;top:349.00px;letter-spacing:-0.180px;">100.000,00</span>
<span class="t" style="left:738.14px;top:349.00px;letter-spacing:-0.180px;">100.000,00</span>
<span class="t" style="left:34.82px;top:384.50px;letter-spacing:0.259px;">Profit</span>
<span class="t" style="left:288.39px;top:384.50px;letter-spacing:-0.180px;color:#058505;">247.267,85</span>
<span class="t" style="left:438.34px;top:384.50px;letter-spacing:-0.180px;color:#058505;">122.409,90</span>
<span class="t" style="left:588.19px;top:384.50px;letter-spacing:-0.180px;color:#058505;">247.267,85</span>
<span class="t" style="left:792.11px;top:384.50px;letter-spacing:-0.180px;color:#058505;">0,00</span>
<span class="t" style="left:34.82px;top:420.00px;letter-spacing:0.000px;">Profit %</span>
<span class="t" style="left:306.76px;top:420.00px;letter-spacing:-0.180px;color:#058505;">247,27%</span>
<span class="t" style="left:456.76px;top:420.00px;letter-spacing:-0.180px;color:#058505;">122,41%</span>
<span class="t" style="left:606.56px;top:420.00px;letter-spacing:-0.180px;color:#058505;">247,27%</span>
<span class="t" style="left:776.22px;top:420.00px;letter-spacing:-0.180px;color:#058505;">0,00%</span>
<span class="t" style="left:34.82px;top:455.50px;letter-spacing:-0.474px;">Profit Per Bar</span>
<span class="t" style="left:342.51px;top:455.50px;letter-spacing:-0.180px;color:#058505;">3,02</span>
<span class="t" style="left:492.31px;top:455.50px;letter-spacing:-0.180px;color:#058505;">2,20</span>
<span class="t" style="left:642.31px;top:455.50px;letter-spacing:-0.180px;color:#058505;">3,02</span>
<span class="t" style="left:821.11px;top:455.50px;letter-spacing:0.000px;color:#fb0c0c;">-</span>
<span class="t" style="left:35.56px;top:491.00px;letter-spacing:-2.070px;">APR</span>
<span class="t" style="left:316.59px;top:491.00px;letter-spacing:-0.180px;color:#058505;">10,12%</span>
<span class="t" style="left:476.42px;top:491.00px;letter-spacing:-0.180px;color:#058505;">6,39%</span>
<span class="t" style="left:616.39px;top:491.00px;letter-spacing:-0.180px;color:#058505;">10,12%</span>
<span class="t" style="left:776.22px;top:491.00px;letter-spacing:-0.180px;color:#058505;">0,00%</span>
<span class="t" style="left:34.78px;top:526.50px;letter-spacing:-0.228px;">Std Dev of Annual Ret...</span>
<span class="t" style="left:316.59px;top:526.50px;letter-spacing:-0.180px;">18,89%</span>
<span class="t" style="left:466.59px;top:526.50px;letter-spacing:-0.180px;">17,27%</span>
<span class="t" style="left:616.39px;top:526.50px;letter-spacing:-0.180px;">18,89%</span>
<span class="t" style="left:776.22px;top:526.50px;letter-spacing:-0.180px;">0,00%</span>
<span class="t" style="left:34.82px;top:562.00px;letter-spacing:-0.524px;">Exposure</span>
<span class="t" style="left:316.59px;top:562.00px;letter-spacing:-0.180px;">86,77%</span>
<span class="t" style="left:466.59px;top:562.00px;letter-spacing:-0.180px;">99,96%</span>
<span class="t" style="left:616.39px;top:562.00px;letter-spacing:-0.180px;">86,77%</span>
<span class="t" style="left:776.22px;top:562.00px;letter-spacing:-0.180px;">0,00%</span>
<span class="t" style="left:34.82px;top:597.50px;letter-spacing:-0.178px;">Maximum Exposure</span>
<span class="t" style="left:306.76px;top:597.50px;letter-spacing:-0.180px;">112,30%</span>
<span class="t" style="left:456.76px;top:597.50px;letter-spacing:-0.180px;">100,00%</span>
<span class="t" style="left:606.56px;top:597.50px;letter-spacing:-0.180px;">112,30%</span>
<span class="t" style="left:776.22px;top:597.50px;letter-spacing:-0.180px;">0,00%</span>
<span class="t" style="left:35.56px;top:633.00px;letter-spacing:-0.185px;">Alpha (α)</span>
<span class="t" style="left:342.51px;top:633.00px;letter-spacing:-0.180px;">3,32</span>
<span class="t" style="left:521.31px;top:633.00px;letter-spacing:0.000px;">-</span>
<span class="t" style="left:642.31px;top:633.00px;letter-spacing:-0.180px;">3,32</span>
<span class="t" style="left:821.11px;top:633.00px;letter-spacing:0.000px;">-</span>
<span class="t" style="left:34.82px;top:668.50px;letter-spacing:-0.668px;">Beta (β)</span>
<span class="t" style="left:342.39px;top:668.50px;letter-spacing:-0.180px;">1,08</span>
<span class="t" style="left:521.31px;top:668.50px;letter-spacing:0.000px;">-</span>
<span class="t" style="left:642.19px;top:668.50px;letter-spacing:-0.180px;">1,08</span>
<span class="t" style="left:821.11px;top:668.50px;letter-spacing:0.000px;">-</span>
<span class="t" style="left:34.78px;top:704.00px;letter-spacing:-0.354px;">Sharpe Ratio</span>
<span class="t" style="left:342.46px;top:704.00px;letter-spacing:-0.180px;">0,59</span>
<span class="t" style="left:492.40px;top:704.00px;letter-spacing:-0.180px;">0,43</span>
<span class="t" style="left:642.26px;top:704.00px;letter-spacing:-0.180px;">0,59</span>
<span class="t" style="left:821.11px;top:704.00px;letter-spacing:0.000px;">-</span>
<span class="t" style="left:34.78px;top:739.50px;letter-spacing:0.010px;">Sortino Ratio</span>
<span class="t" style="left:342.39px;top:739.50px;letter-spacing:-0.180px;">0,78</span>
<span class="t" style="left:492.36px;top:739.50px;letter-spacing:-0.180px;">0,55</span>
<span class="t" style="left:642.19px;top:739.50px;letter-spacing:-0.180px;">0,78</span>
<span class="t" style="left:821.11px;top:739.50px;letter-spacing:0.000px;">-</span>
<span class="t" style="left:35.52px;top:775.00px;letter-spacing:-0.792px;">WL Score</span>
<span class="t" style="left:342.39px;top:775.00px;letter-spacing:-0.180px;">6,18</span>
<span class="t" style="left:492.39px;top:775.00px;letter-spacing:-0.180px;">2,78</span>
<span class="t" style="left:642.19px;top:775.00px;letter-spacing:-0.180px;">6,18</span>
<span class="t" style="left:792.11px;top:775.00px;letter-spacing:-0.180px;">0,00</span>
<span class="t" style="left:34.78px;top:810.50px;letter-spacing:-0.124px;">Slope of Equity Curve</span>
<span class="t" style="left:332.68px;top:810.50px;letter-spacing:-0.180px;color:#058505;">94,02</span>
<span class="t" style="left:482.30px;top:810.50px;letter-spacing:-0.180px;color:#058505;">41,44</span>
<span class="t" style="left:632.48px;top:810.50px;letter-spacing:-0.180px;color:#058505;">94,02</span>
<span class="t" style="left:792.11px;top:810.50px;letter-spacing:-0.180px;color:#058505;">0,00</span>
<span class="t" style="left:34.90px;top:881.50px;letter-spacing:-0.176px;font-weight:700;color:#000;">Interest, Commissio...</span>
<span class="t" style="left:34.69px;top:917.00px;letter-spacing:-0.184px;">Commission Paid</span>
<span class="t" style="left:298.17px;top:917.00px;letter-spacing:-0.180px;color:#058505;">30.547,90</span>
<span class="t" style="left:492.36px;top:917.00px;letter-spacing:-0.180px;color:#058505;">4,45</span>
<span class="t" style="left:597.97px;top:917.00px;letter-spacing:-0.180px;color:#058505;">30.547,90</span>
<span class="t" style="left:792.11px;top:917.00px;letter-spacing:-0.180px;color:#058505;">0,00</span>
<span class="t" style="left:34.69px;top:952.50px;letter-spacing:-0.506px;">Cash Interest Received</span>
<span class="t" style="left:342.31px;top:952.50px;letter-spacing:-0.180px;color:#058505;">0,00</span>
<span class="t" style="left:492.31px;top:952.50px;letter-spacing:-0.180px;color:#058505;">0,00</span>
<span class="t" style="left:642.11px;top:952.50px;letter-spacing:-0.180px;color:#058505;">0,00</span>
<span class="t" style="left:792.11px;top:952.50px;letter-spacing:-0.180px;color:#058505;">0,00</span>
<span class="t" style="left:34.82px;top:988.00px;letter-spacing:-0.144px;">Margin Interest Paid</span>
<span class="t" style="left:302.38px;top:988.00px;letter-spacing:-0.180px;color:#fb0c0c;">-7.883,87</span>
<span class="t" style="left:486.50px;top:988.00px;letter-spacing:-0.180px;color:#058505;">-0,00</span>
<span class="t" style="left:602.18px;top:988.00px;letter-spacing:-0.180px;color:#fb0c0c;">-7.883,87</span>
<span class="t" style="left:786.30px;top:988.00px;letter-spacing:-0.180px;color:#058505;">-0,00</span>
<span class="t" style="left:34.82px;top:1023.50px;letter-spacing:0.016px;">Maximum Margin Used</span>
<span class="t" style="left:342.51px;top:1023.50px;letter-spacing:-0.180px;">1,12</span>
<span class="t" style="left:492.31px;top:1023.50px;letter-spacing:-0.180px;">1,00</span>
<span class="t" style="left:642.31px;top:1023.50px;letter-spacing:-0.180px;">1,12</span>
<span class="t" style="left:792.11px;top:1023.50px;letter-spacing:-0.180px;">1,00</span>
<span class="t" style="left:34.82px;top:1059.00px;letter-spacing:-0.361px;">Dividends Received</span>
<span class="t" style="left:342.31px;top:1059.00px;letter-spacing:-0.180px;color:#058505;">0,00</span>
<span class="t" style="left:492.31px;top:1059.00px;letter-spacing:-0.180px;color:#058505;">0,00</span>
<span class="t" style="left:642.11px;top:1059.00px;letter-spacing:-0.180px;color:#058505;">0,00</span>
<span class="t" style="left:792.11px;top:1059.00px;letter-spacing:-0.180px;color:#058505;">0,00</span>
<span class="t" style="left:35.20px;top:1094.50px;letter-spacing:-0.296px;">Total Currency Adj</span>
<span class="t" style="left:342.31px;top:1094.50px;letter-spacing:-0.180px;color:#058505;">0,00</span>
<span class="t" style="left:492.31px;top:1094.50px;letter-spacing:-0.180px;color:#058505;">0,00</span>
<span class="t" style="left:642.11px;top:1094.50px;letter-spacing:-0.180px;color:#058505;">0,00</span>
<span class="t" style="left:792.11px;top:1094.50px;letter-spacing:-0.180px;color:#058505;">0,00</span>
<span class="t" style="left:34.90px;top:1165.50px;letter-spacing:-0.571px;font-weight:700;color:#000;">Positions</span>
<span class="t" style="left:34.82px;top:1201.00px;letter-spacing:-0.089px;">Position Count</span>
<span class="t" style="left:332.53px;top:1201.00px;letter-spacing:-0.180px;">5.605</span>
<span class="t" style="left:516.99px;top:1201.00px;letter-spacing:-0.180px;">2</span>
<span class="t" style="left:632.33px;top:1201.00px;letter-spacing:-0.180px;">5.605</span>
<span class="t" style="left:816.59px;top:1201.00px;letter-spacing:-0.180px;">0</span>
<span class="t" style="left:35.56px;top:1236.50px;letter-spacing:0.104px;">Avg Profit</span>
<span class="t" style="left:332.68px;top:1236.50px;letter-spacing:-0.180px;color:#058505;">45,52</span>
<span class="t" style="left:448.22px;top:1236.50px;letter-spacing:-0.180px;color:#058505;">61.204,95</span>
<span class="t" style="left:632.48px;top:1236.50px;letter-spacing:-0.180px;color:#058505;">45,52</span>
<span class="t" style="left:821.11px;top:1236.50px;letter-spacing:0.000px;color:#fb0c0c;">-</span>
<span class="t" style="left:35.56px;top:1272.00px;letter-spacing:0.040px;">Avg Profit %</span>
<span class="t" style="left:326.42px;top:1272.00px;letter-spacing:-0.180px;color:#058505;">0,27%</span>
<span class="t" style="left:456.76px;top:1272.00px;letter-spacing:-0.180px;color:#058505;">137,31%</span>
<span class="t" style="left:626.22px;top:1272.00px;letter-spacing:-0.180px;color:#058505;">0,27%</span>
<span class="t" style="left:821.11px;top:1272.00px;letter-spacing:0.000px;color:#fb0c0c;">-</span>
<span class="t" style="left:34.82px;top:1307.50px;letter-spacing:-0.179px;">Profit Factor</span>
<span class="t" style="left:342.40px;top:1307.50px;letter-spacing:-0.180px;">1,16</span>
<span class="t" style="left:521.31px;top:1307.50px;letter-spacing:0.000px;">-</span>
<span class="t" style="left:642.20px;top:1307.50px;letter-spacing:-0.180px;">1,16</span>
<span class="t" style="left:821.11px;top:1307.50px;letter-spacing:0.000px;">-</span>
<span class="t" style="left:34.82px;top:1343.00px;letter-spacing:-0.193px;">Payoff Ratio</span>
<span class="t" style="left:342.13px;top:1343.00px;letter-spacing:-0.180px;">1,04</span>
<span class="t" style="left:521.31px;top:1343.00px;letter-spacing:0.000px;">-</span>
<span class="t" style="left:641.93px;top:1343.00px;letter-spacing:-0.180px;">1,04</span>
<span class="t" style="left:821.11px;top:1343.00px;letter-spacing:0.000px;">-</span>
<span class="t" style="left:35.56px;top:1378.50px;letter-spacing:-0.288px;">Avg Bars Held</span>
<span class="t" style="left:342.46px;top:1378.50px;letter-spacing:-0.180px;">4,99</span>
<span class="t" style="left:458.00px;top:1378.50px;letter-spacing:-0.180px;">3.129,50</span>
<span class="t" style="left:642.26px;top:1378.50px;letter-spacing:-0.180px;">4,99</span>
<span class="t" style="left:821.11px;top:1378.50px;letter-spacing:0.000px;">-</span>
<span class="t" style="left:35.56px;top:1414.00px;letter-spacing:-0.341px;">Avg Trades Per Month</span>
<span class="t" style="left:332.53px;top:1414.00px;letter-spacing:-0.180px;">72,25</span>
<span class="t" style="left:492.49px;top:1414.00px;letter-spacing:-0.180px;">0,01</span>
<span class="t" style="left:632.33px;top:1414.00px;letter-spacing:-0.180px;">72,25</span>
<span class="t" style="left:792.11px;top:1414.00px;letter-spacing:-0.180px;">0,00</span>
<span class="t" style="left:35.56px;top:1449.50px;letter-spacing:-0.261px;">Avg Bars Held as % of...</span>
<span class="t" style="left:342.40px;top:1449.50px;letter-spacing:-0.180px;">0,23</span>
<span class="t" style="left:482.30px;top:1449.50px;letter-spacing:-0.180px;">95,64</span>
<span class="t" style="left:642.20px;top:1449.50px;letter-spacing:-0.180px;">0,23</span>
<span class="t" style="left:821.11px;top:1449.50px;letter-spacing:0.000px;">-</span>
<span class="t" style="left:34.82px;top:1485.00px;letter-spacing:-0.470px;">Largest Bars Held as %...</span>
<span class="t" style="left:342.31px;top:1485.00px;letter-spacing:-0.180px;">8,20</span>
<span class="t" style="left:482.57px;top:1485.00px;letter-spacing:-0.180px;">99,36</span>
<span class="t" style="left:642.11px;top:1485.00px;letter-spacing:-0.180px;">8,20</span>
<span class="t" style="left:821.11px;top:1485.00px;letter-spacing:0.000px;">-</span>
<span class="t" style="left:34.82px;top:1520.50px;letter-spacing:-0.304px;">NSF Position Count</span>
<span class="t" style="left:322.85px;top:1520.50px;letter-spacing:-0.180px;">11.242</span>
<span class="t" style="left:516.79px;top:1520.50px;letter-spacing:-0.180px;">0</span>
<span class="t" style="left:622.65px;top:1520.50px;letter-spacing:-0.180px;">11.242</span>
<span class="t" style="left:816.59px;top:1520.50px;letter-spacing:-0.180px;">0</span>
<span class="t" style="left:34.82px;top:1556.00px;letter-spacing:-0.636px;">NSF Ratio</span>
<span class="t" style="left:342.49px;top:1556.00px;letter-spacing:-0.180px;">2,01</span>
<span class="t" style="left:492.31px;top:1556.00px;letter-spacing:-0.180px;">0,00</span>
<span class="t" style="left:642.29px;top:1556.00px;letter-spacing:-0.180px;">2,01</span>
<span class="t" style="left:821.11px;top:1556.00px;letter-spacing:0.000px;">-</span>
<div class="b" style="left:5px;top:1646px;width:2194px;height:1px;background:#acacac;"></div>
<div class="b" style="left:5px;top:1647px;width:2194px;height:33px;background:#f5f5f5;"></div>
<div class="b" style="left:0px;top:1680px;width:2199px;height:1px;background:#a9bce0;"></div>
<span class="t" style="left:10.23px;top:1652.60px;letter-spacing:-0.220px;">160 Symbol(s) Loaded</span>
<span class="t" style="left:257.92px;top:1652.60px;letter-spacing:-0.174px;color:#058505;">Backtest Complete</span>
<div class="b" style="left:418px;top:1652px;width:2px;height:24px;background:#b7c9e4;"></div>
<span class="t" style="left:430.02px;top:1652.60px;letter-spacing:0.351px;">Profit:</span>
<span class="t" style="left:483.79px;top:1652.60px;letter-spacing:-0.214px;color:#058505;">247.267,85</span>
<span class="t" style="left:577.93px;top:1652.60px;letter-spacing:-0.595px;color:#058505;">10,12% APR</span>
<div class="b" style="left:688px;top:1652px;width:2px;height:24px;background:#b7c9e4;"></div>
<span class="t" style="left:699.72px;top:1652.60px;letter-spacing:-0.114px;">Benchmark Profit:</span>
<span class="t" style="left:846.03px;top:1652.60px;letter-spacing:-0.202px;color:#058505;">122.409,90</span>
<span class="t" style="left:939.59px;top:1652.60px;letter-spacing:-0.638px;color:#058505;">6,39% APR</span>
</div>
</body></html>
